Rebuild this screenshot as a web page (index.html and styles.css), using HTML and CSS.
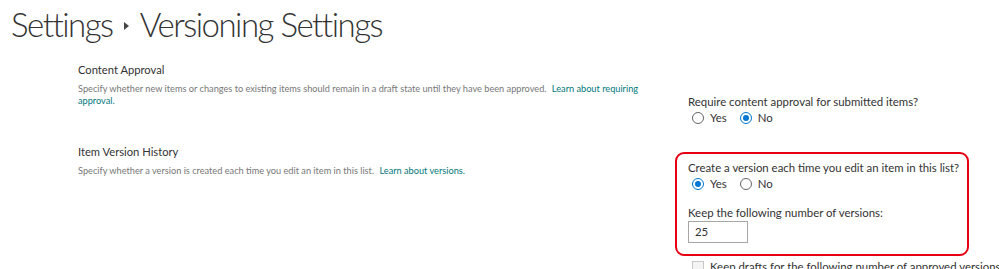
FILE: index.html
```html
<!DOCTYPE html>
<html lang="en">
<head>
    <meta charset="UTF-8">
    <title>Versioning Settings</title>
    <link rel="stylesheet" href="styles.css">
</head>
<body>
    <h1 class="page-title">
        <span>Settings</span>
        <span class="crumb-arrow"></span>
        <span>Versioning Settings</span>
    </h1>

    <div class="section section-approval">
        <div class="section-info">
            <h3>Content Approval</h3>
            <p>
                Specify whether new items or changes to existing items should remain in a draft state until they have been approved.
                <a href="#">Learn about requiring approval.</a>
            </p>
        </div>
        <div class="section-field">
            <div class="field-label">Require content approval for submitted items?</div>
            <div class="radio-row">
                <label class="radio"><span class="radio-dot"></span>Yes</label>
                <label class="radio"><span class="radio-dot checked"></span>No</label>
            </div>
        </div>
    </div>

    <div class="section section-history">
        <div class="section-info">
            <h3>Item Version History</h3>
            <p>
                Specify whether a version is created each time you edit an item in this list.
                <a href="#">Learn about versions.</a>
            </p>
        </div>
        <div class="section-field">
            <div class="highlight-box">
                <div class="field-label">Create a version each time you edit an item in this list?</div>
                <div class="radio-row">
                    <label class="radio"><span class="radio-dot checked"></span>Yes</label>
                    <label class="radio"><span class="radio-dot"></span>No</label>
                </div>
                <div class="field-label keep-label">Keep the following number of versions:</div>
                <div class="text-input">25</div>
            </div>
            <label class="check-row"><span class="checkbox"></span>Keep drafts for the following number of approved versions:</label>
        </div>
    </div>
</body>
</html>
```

FILE: styles.css
```css
* {
    margin: 0;
    padding: 0;
    box-sizing: border-box;
}

body {
    font-family: Lato, 'Open Sans', sans-serif;
    background: #fff;
    color: #333;
    width: 999px;
    height: 269px;
    overflow: hidden;
}

.page-title {
    display: flex;
    align-items: center;
    gap: 11px;
    padding: 0 0 0 11px;
    font-size: 33px;
    font-weight: 300;
    letter-spacing: -1.5px;
    color: #333;
    height: 48px;
}

.crumb-arrow {
    width: 0;
    height: 0;
    border-top: 4px solid transparent;
    border-bottom: 4px solid transparent;
    border-left: 5px solid #444;
    margin-top: 4px;
}

.section {
    display: grid;
    grid-template-columns: 566px 1fr;
    gap: 44px;
    padding-left: 78px;
}

.section-approval {
    height: 97px;
    padding-top: 15px;
}

.section h3 {
    font-size: 11.2px;
    font-weight: 400;
    color: #333;
    margin-bottom: 7px;
}

.section p {
    font-size: 9.2px;
    line-height: 12px;
    color: #777;
}

.section a {
    color: #03787c;
    text-decoration: none;
    margin-left: 3px;
}

.section-approval .section-field {
    padding-top: 31px;
}

.field-label {
    font-size: 11.4px;
    color: #333;
    line-height: 16px;
    white-space: nowrap;
}

.radio-row {
    display: flex;
    gap: 13px;
    padding-left: 4px;
}

.radio {
    display: flex;
    align-items: center;
    gap: 6px;
    font-size: 11.4px;
    line-height: 16px;
    color: #333;
}

.radio-dot {
    width: 12px;
    height: 12px;
    border: 1px solid #666;
    border-radius: 50%;
    display: flex;
    align-items: center;
    justify-content: center;
}

.radio-dot.checked {
    border-color: #0078d4;
}

.radio-dot.checked::after {
    content: "";
    width: 6px;
    height: 6px;
    border-radius: 50%;
    background: #0078d4;
}

.section-history .section-field {
    margin-left: -13px;
    padding-top: 7px;
}

.highlight-box {
    width: 294px;
    border: 2px solid #e60012;
    border-radius: 9px;
    padding: 6px 0 11px 11px;
}

.keep-label {
    margin-top: 13px;
}

.text-input {
    width: 60px;
    height: 22px;
    border: 1px solid #a6a6a6;
    font-size: 11.4px;
    line-height: 20px;
    padding-left: 6px;
    color: #333;
}

.check-row {
    display: flex;
    align-items: flex-start;
    gap: 6px;
    padding: 3px 0 0 17px;
    font-size: 11.4px;
    line-height: 16px;
    color: #333;
    white-space: nowrap;
}

.checkbox {
    width: 12px;
    height: 12px;
    margin-top: 2px;
    border: 1px solid #c8c8c8;
    background: #f4f4f4;
}
```
